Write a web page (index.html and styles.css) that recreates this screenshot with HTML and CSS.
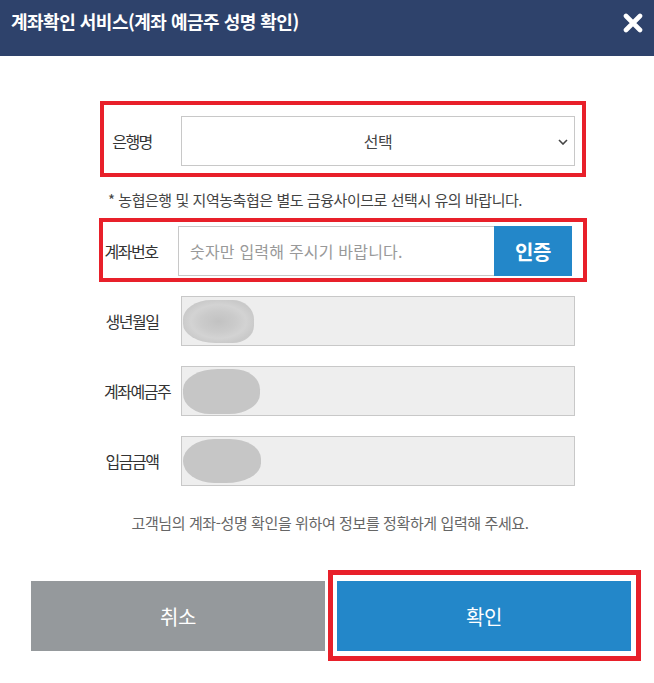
FILE: index.html
```html
<!DOCTYPE html>
<html lang="ko">
<head>
<meta charset="utf-8">
<title>계좌확인 서비스</title>
<link rel="stylesheet" href="styles.css">
</head>
<body>
<div class="dialog">
  <header class="head">
    <h1 class="title">계좌확인 서비스(계좌 예금주 성명 확인)</h1>
    <svg class="close" width="20" height="20" viewBox="0 0 20 20" aria-hidden="true">
      <path d="M3 3 L17 17 M17 3 L3 17" stroke="#fff" stroke-width="4.6" stroke-linecap="round" fill="none"/>
    </svg>
  </header>

  <div class="form">
    <div class="row hl hl-bank">
      <span class="label">은행명</span>
      <div class="field select">
        <span class="select-text">선택</span>
        <svg class="chev" width="10" height="6" viewBox="0 0 10 6" aria-hidden="true">
          <path d="M1 1 L5 5 L9 1" stroke="#444" stroke-width="1.6" fill="none"/>
        </svg>
      </div>
    </div>

    <p class="note">* 농협은행 및 지역농축협은 별도 금융사이므로 선택시 유의 바랍니다.</p>

    <div class="row hl hl-acct">
      <span class="label">계좌번호</span>
      <div class="field acct">
        <span class="placeholder">숫자만 입력해 주시기 바랍니다.</span>
        <span class="verify">인증</span>
      </div>
    </div>

    <div class="row plain first">
      <span class="label">생년월일</span>
      <div class="field ro"><span class="blur blur-a"></span></div>
    </div>
    <div class="row plain">
      <span class="label">계좌예금주</span>
      <div class="field ro"><span class="blur blur-b"></span></div>
    </div>
    <div class="row plain">
      <span class="label">입금금액</span>
      <div class="field ro"><span class="blur blur-c"></span></div>
    </div>
  </div>

  <p class="guide">고객님의 계좌-성명 확인을 위하여 정보를 정확하게 입력해 주세요.</p>

  <div class="actions">
    <button class="btn cancel">취소</button>
    <div class="hl-btn"><button class="btn ok">확인</button></div>
  </div>
</div>
</body>
</html>
```

FILE: styles.css
```css
* { box-sizing: border-box; }
html, body { margin: 0; padding: 0; background: #fff; }
body {
  font-family: "Noto Sans CJK KR", "Noto Sans", sans-serif;
  color: #333;
}
.dialog { width: 654px; height: 683px; background: #fff; }

.head {
  height: 56px;
  background: #2e426b;
  display: flex;
  justify-content: space-between;
  align-items: flex-start;
  padding: 10px 11px 0 11px;
}
.title {
  margin: 0;
  font-size: 18px;
  line-height: 22px;
  font-weight: 700;
  letter-spacing: -0.5px;
  color: #fff;
}
.close { margin-top: 3px; }

.form { margin-left: 99px; width: 488px; }

.row { display: flex; align-items: center; }
.label {
  width: 56px;
  flex: none;
  text-align: center;
  font-size: 16px;
  letter-spacing: -1.5px;
  color: #333;
  white-space: nowrap;
}
.field { width: 394px; height: 50px; flex: none; }

.hl { border: 4px solid #e8202a; }
.hl-bank {
  margin-top: 45px;
  margin-left: 1px;
  width: 486px;
  padding: 11px 7px 7px 0;
}
.hl-bank .field { margin-left: 21px; }
.hl-acct {
  width: 488px;
  padding: 4px 11px 2px 0;
}
.hl-acct .field { margin-left: 19px; }

.select {
  border: 1px solid #c8c8c8;
  position: relative;
  display: flex;
  align-items: center;
  justify-content: center;
}
.select-text { font-size: 16px; color: #444; letter-spacing: -0.5px; }
.chev { position: absolute; right: 6px; top: 22px; }

.note {
  margin: 12px 0 8px 9px;
  font-size: 15px;
  line-height: 21px;
  letter-spacing: -0.45px;
  color: #444;
}

.acct { display: flex; }
.placeholder {
  flex: 1;
  border: 1px solid #c8c8c8;
  border-right: none;
  display: flex;
  align-items: center;
  padding-left: 11px;
  font-size: 16px;
  color: #999;
  letter-spacing: 0.2px;
}
.verify {
  width: 78px;
  background: #2387c9;
  color: #fff;
  font-weight: 700;
  font-size: 20px;
  letter-spacing: -0.5px;
  display: flex;
  align-items: center;
  justify-content: center;
}

.plain { padding-left: 5px; margin-top: 20px; }
.plain.first { margin-top: 14px; }
.plain .field { margin-left: 21px; }
.ro {
  background: #eeeeee;
  border: 1px solid #c8c8c8;
  display: flex;
  align-items: center;
  padding-left: 1px;
}
.blur { display: block; background: #c6c6c6; }
.blur-a {
  width: 71px; height: 43px;
  border-radius: 40% 30% 30% 45% / 45% 45% 40% 45%;
  background: radial-gradient(ellipse at 50% 50%, #c2c2c2 0%, #cbcbcb 35%, #d3d3d3 55%, #c9c9c9 75%, #d6d6d6 100%);
}
.blur-b {
  width: 77px; height: 45px;
  border-radius: 45% 35% 40% 35% / 45% 45% 45% 45%;
  background: #c6c6c6;
}
.blur-c {
  width: 78px; height: 44px;
  border-radius: 40% 40% 45% 40% / 50% 45% 45% 50%;
  background: #c6c6c6;
}

.guide {
  margin: 26px 0 0;
  text-align: center;
  padding-left: 6px;
  font-size: 15px;
  line-height: 21px;
  letter-spacing: -0.4px;
  color: #666;
}

.actions {
  display: flex;
  align-items: flex-start;
  padding-left: 31px;
  margin-top: 37px;
}
.btn {
  border: none;
  width: 294px;
  height: 70px;
  font-family: inherit;
  font-size: 20px;
  color: #fff;
  letter-spacing: -0.5px;
  padding: 0;
}
.cancel { background: #95999c; margin-top: 11px; }
.hl-btn {
  margin-left: 3px;
  border: 5px solid #e8202a;
  padding: 6px 5px 5px 4px;
}
.ok { background: #2387c9; display: block; }
```
